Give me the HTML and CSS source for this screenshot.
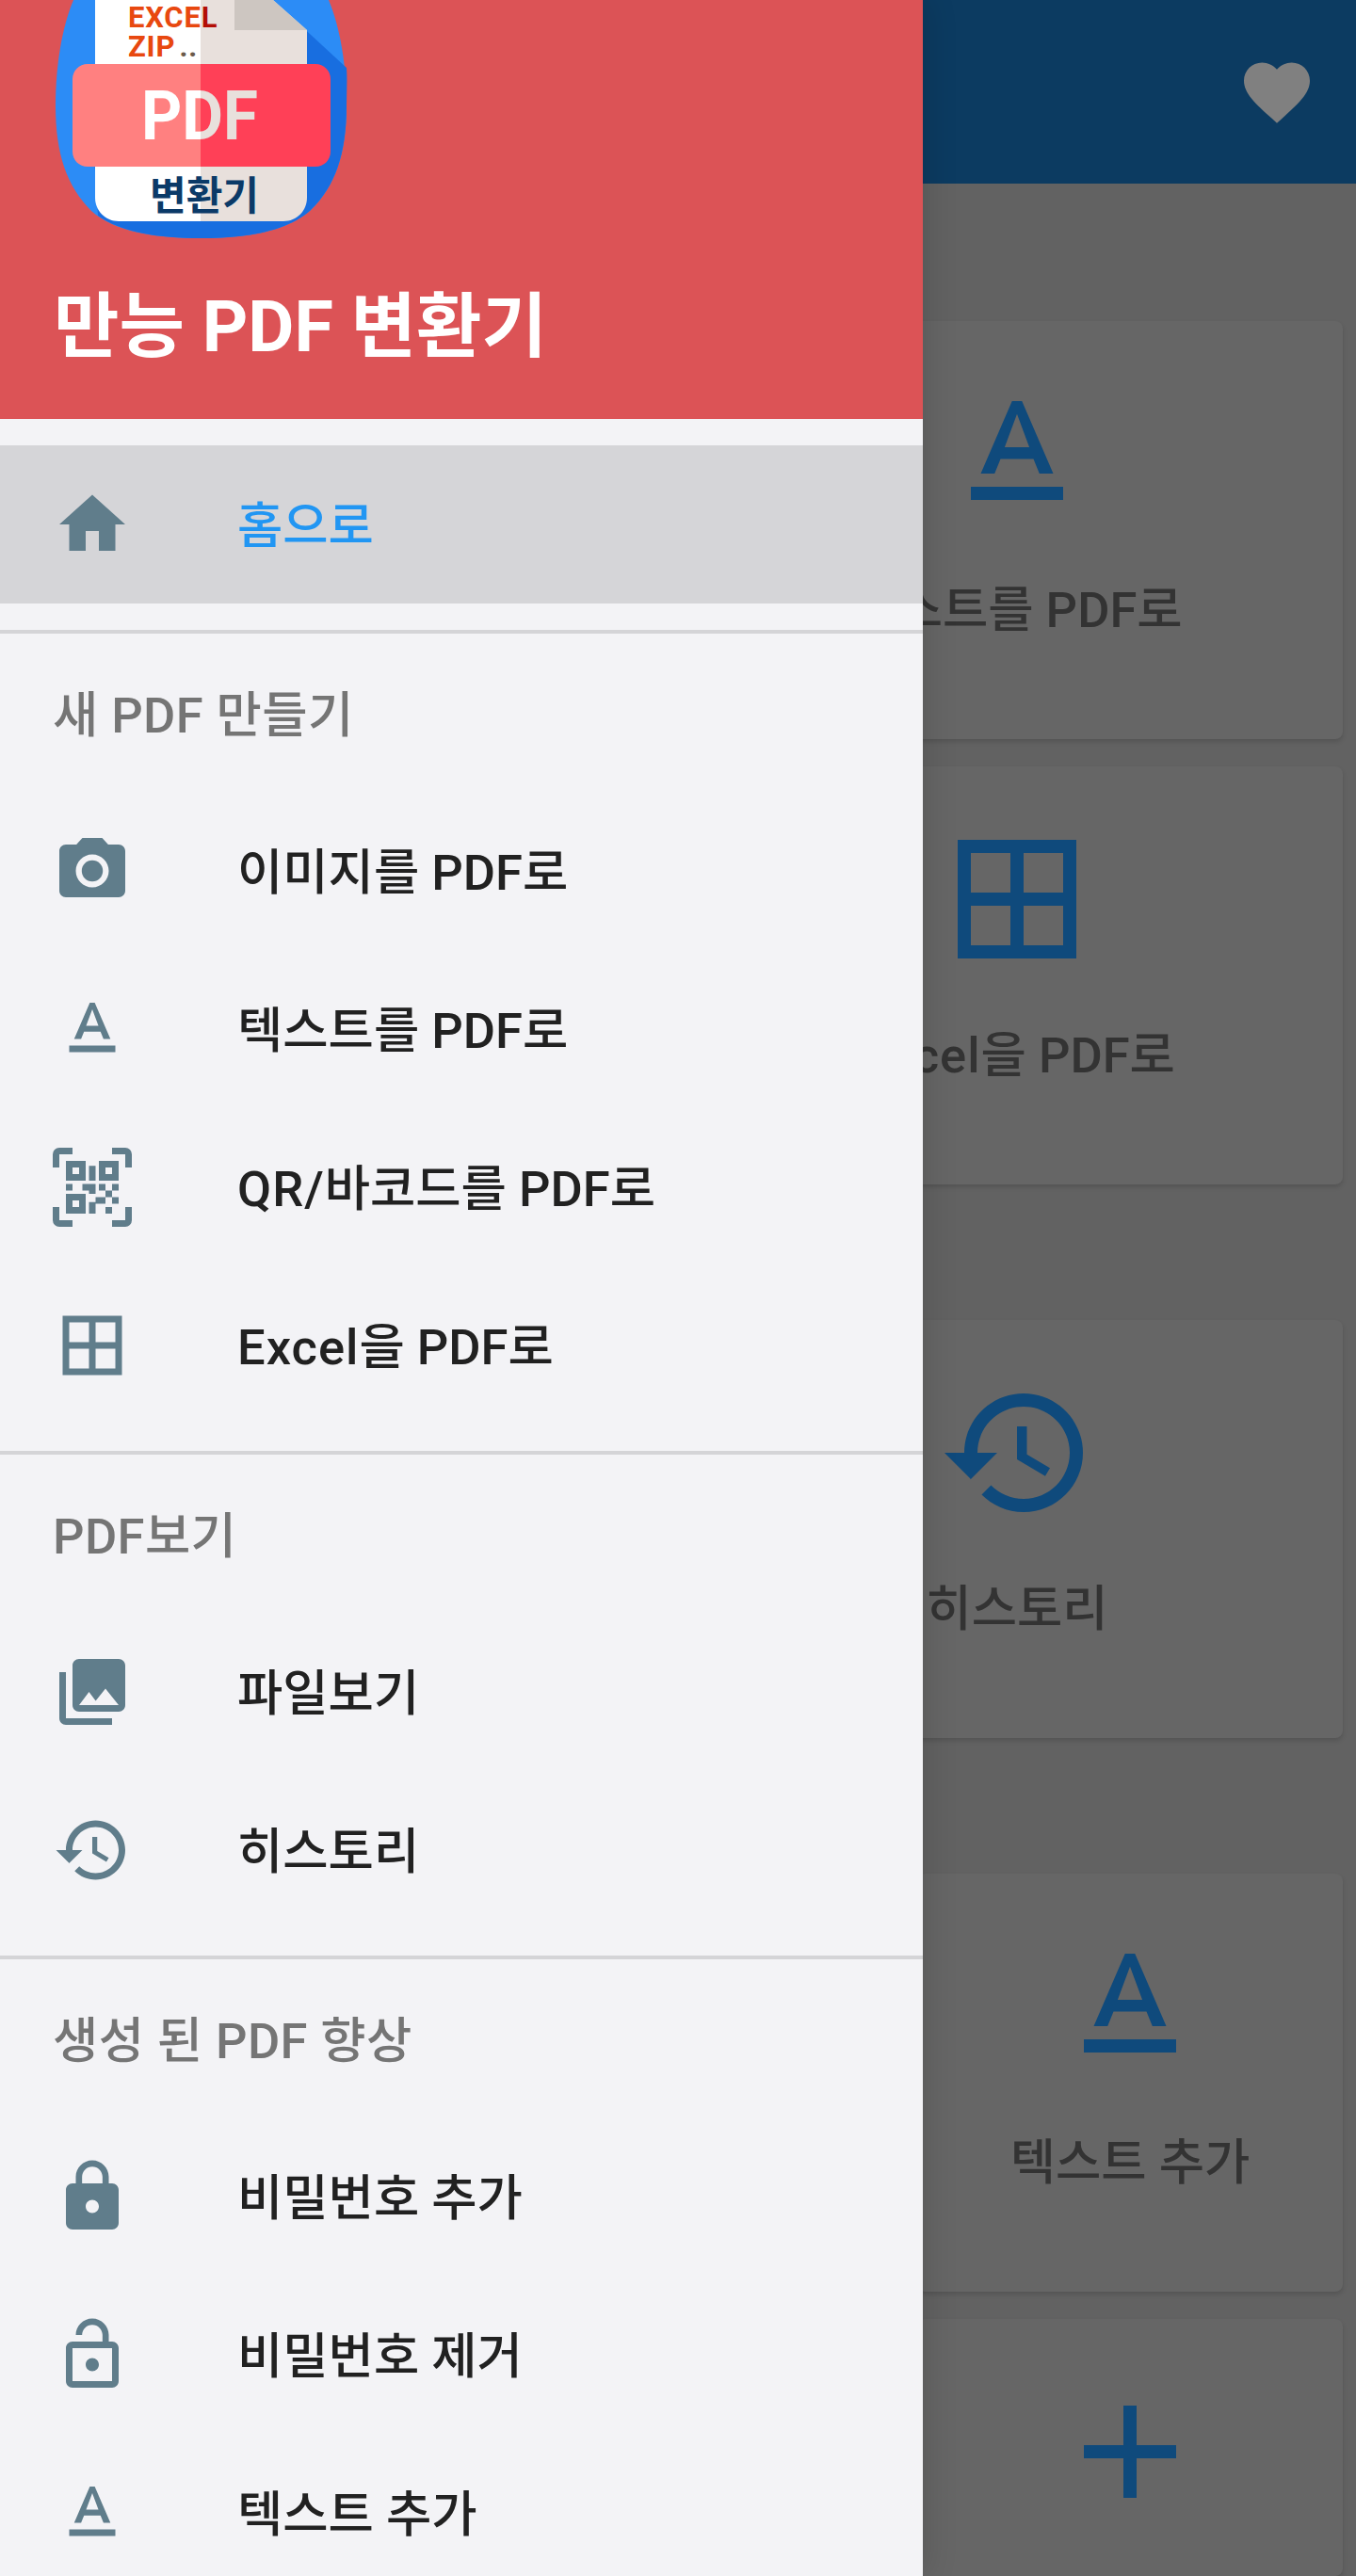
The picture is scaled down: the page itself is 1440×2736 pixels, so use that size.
FILE: index.html
```html
<!DOCTYPE html>
<html lang="ko">
<head>
    <meta charset="UTF-8">
    <meta name="viewport" content="width=device-width, initial-scale=1.0">
    <title>만능 PDF 변환기</title>
    <link rel="stylesheet" href="styles.css">
</head>
<body>
    <svg class="sprite" width="0" height="0">
        <symbol id="i-text" viewBox="0 0 24 24"><path d="M5 17v2h14v-2H5zm4.5-4.2h5l.9 2.2h2.1L12.75 4h-1.5L6.5 15h2.1l.9-2.2zM12 5.98L13.87 11h-3.74L12 5.98z"/></symbol>
        <symbol id="i-grid" viewBox="0 0 24 24"><path d="M3 3v18h18V3H3zm8 16H5v-6h6v6zm0-8H5V5h6v6zm8 8h-6v-6h6v6zm0-8h-6V5h6v6z"/></symbol>
        <symbol id="i-history" viewBox="0 0 24 24"><path d="M13 3c-4.97 0-9 4.03-9 9H1l3.89 3.89.07.14L9 12H6c0-3.87 3.13-7 7-7s7 3.13 7 7-3.13 7-7 7c-1.93 0-3.68-.79-4.94-2.06l-1.42 1.42C8.27 19.99 10.51 21 13 21c4.97 0 9-4.03 9-9s-4.03-9-9-9zm-1 5v5l4.28 2.54.72-1.21-3.5-2.08V8H12z"/></symbol>
    </svg>

    <!-- 뒤쪽 메인 화면 -->
    <div class="app">
        <div class="toolbar">
            <svg class="heart" viewBox="0 0 24 24"><path d="M12 21.35l-1.45-1.32C5.4 15.36 2 12.28 2 8.5 2 5.42 4.42 3 7.5 3c1.74 0 3.41.81 4.5 2.09C13.09 3.81 14.76 3 16.5 3 19.58 3 22 5.42 22 8.5c0 3.78-3.4 6.86-8.55 11.54L12 21.35z"/></svg>
        </div>

        <div class="section section-first">
            <div class="cards cards-2">
                <div class="card"></div>
                <div class="card">
                    <svg class="card-icon"><use href="#i-text"/></svg>
                    <p>텍스트를 PDF로</p>
                </div>
                <div class="card"></div>
                <div class="card">
                    <svg class="card-icon"><use href="#i-grid"/></svg>
                    <p><span class="latin">Excel</span>을 PDF로</p>
                </div>
            </div>
        </div>

        <div class="section">
            <div class="cards cards-2">
                <div class="card"></div>
                <div class="card">
                    <svg class="card-icon"><use href="#i-history"/></svg>
                    <p>히스토리</p>
                </div>
            </div>
        </div>

        <div class="section">
            <div class="cards cards-3">
                <div class="card"></div>
                <div class="card"></div>
                <div class="card">
                    <svg class="card-icon"><use href="#i-text"/></svg>
                    <p>텍스트 추가</p>
                </div>
                <div class="card card-last"></div>
                <div class="card card-last"></div>
                <div class="card card-last">
                    <svg class="card-icon" viewBox="0 0 24 24"><path d="M19 13h-6v6h-2v-6H5v-2h6V5h2v6h6v2z"/></svg>
                </div>
            </div>
        </div>
    </div>

    <!-- 네비게이션 드로어 -->
    <div class="drawer">
        <div class="drawer-header">
            <svg class="logo" viewBox="59 0 310 254">
                <defs>
                    <linearGradient id="pdfFill" gradientUnits="userSpaceOnUse" x1="152" y1="0" x2="274" y2="0">
                        <stop offset="0.5" stop-color="#ffffff"/>
                        <stop offset="0.5" stop-color="#e8e0dc"/>
                    </linearGradient>
                </defs>
                <path fill="#2c8cf6" d="M78 0C66 28 59 70 59 112c0 52 12 86 38 112 24 22 68 29 116 29s92-7 117-30c26-25 38-60 38-111 0-42-7-84-19-112z"/>
                <path fill="#186ee0" d="M290 0l78 72c1 14 0 27 0 40 0 51-12 86-38 111-25 23-69 30-117 30-44 0-84-6-109-24l-4-62z"/>
                <path fill="#ffffff" d="M101 0h112v235h-87c-14 0-25-11-25-25z"/>
                <path fill="#e8e0dc" d="M213 0h77l36 32v178c0 14-11 25-25 25h-88z"/>
                <path fill="#cdc6c1" d="M249 0h41l36 32h-77z"/>
                <text class="logo-small" x="136" y="29">EXCE<tspan fill="#b30e05">L</tspan></text>
                <text class="logo-small" x="136" y="60">ZIP<tspan fill="#6b5a4a" dx="10">..</tspan></text>
                <path fill="#ff8080" d="M213 68H93c-9 0-16 7-16 16v77c0 9 7 16 16 16h120z"/>
                <path fill="#ff4057" d="M213 68h122c9 0 16 7 16 16v77c0 9-7 16-16 16H213z"/>
                <text class="logo-pdf" x="150" y="148" fill="url(#pdfFill)" textLength="124" lengthAdjust="spacingAndGlyphs">PDF</text>
                <text class="logo-name" x="159" y="223" textLength="116" lengthAdjust="spacingAndGlyphs">변환기</text>
            </svg>
            <div class="drawer-title">만능 PDF 변환기</div>
        </div>

        <div class="group group-home">
            <a class="item active">
                <svg class="item-icon" viewBox="0 0 24 24"><path d="M10 20v-6h4v6h5v-8h3L12 3 2 12h3v8z"/></svg>
                <span>홈으로</span>
            </a>
        </div>

        <div class="group">
            <div class="group-title">새 PDF 만들기</div>
            <a class="item">
                <svg class="item-icon" viewBox="0 0 24 24"><circle cx="12" cy="12" r="3.2"/><path d="M9 2L7.17 4H4c-1.1 0-2 .9-2 2v12c0 1.1.9 2 2 2h16c1.1 0 2-.9 2-2V6c0-1.1-.9-2-2-2h-3.17L15 2H9zm3 15c-2.76 0-5-2.24-5-5s2.24-5 5-5 5 2.24 5 5-2.24 5-5 5z"/></svg>
                <span>이미지를 PDF로</span>
            </a>
            <a class="item">
                <svg class="item-icon"><use href="#i-text"/></svg>
                <span>텍스트를 PDF로</span>
            </a>
            <a class="item">
                <svg class="item-icon" viewBox="0 0 24 24"><path d="M0 6V2a2 2 0 0 1 2-2h4v2H2v4zM18 0h4a2 2 0 0 1 2 2v4h-2V2h-4zM0 18h2v4h4v2H2a2 2 0 0 1-2-2zM22 18h2v4a2 2 0 0 1-2 2h-4v-2h4z"/><path fill-rule="evenodd" d="M4 4h6v6H4zM6 6v2h2V6zM14 4h6v6h-6zM16 6v2h2V6zM4 14h6v6H4zM6 16v2h2v-2zM11 5.500h2V10h-2zM4 11h2v2H4zM9 11h4v3h-2v-1H9zM14 11h2v2h-2zM18 11h2v2h-2zM16 13h2v2h-2zM13 15h3v2h-3zM18 15h2v2h-2zM11 16.500h2V20h-2zM16 18h2v2h-2z"/></svg>
                <span><b class="latin">QR/</b>바코드를 PDF로</span>
            </a>
            <a class="item">
                <svg class="item-icon"><use href="#i-grid"/></svg>
                <span><b class="latin">Excel</b>을 PDF로</span>
            </a>
        </div>

        <div class="group">
            <div class="group-title">PDF보기</div>
            <a class="item">
                <svg class="item-icon" viewBox="0 0 24 24"><path d="M22 16V4c0-1.100-.9-2-2-2H8c-1.100 0-2 .9-2 2v12c0 1.100.9 2 2 2h12c1.100 0 2-.9 2-2zm-11-4l2.030 2.710L16 11l4 5H8l3-4zM2 6v14c0 1.100.9 2 2 2h14v-2H4V6H2z"/></svg>
                <span>파일보기</span>
            </a>
            <a class="item">
                <svg class="item-icon"><use href="#i-history"/></svg>
                <span>히스토리</span>
            </a>
        </div>

        <div class="group">
            <div class="group-title">생성 된 PDF 향상</div>
            <a class="item">
                <svg class="item-icon" viewBox="0 0 24 24"><path d="M18 8h-1V6c0-2.760-2.240-5-5-5S7 3.240 7 6v2H6c-1.100 0-2 .9-2 2v10c0 1.100.9 2 2 2h12c1.100 0 2-.9 2-2V10c0-1.100-.9-2-2-2zm-6 9c-1.100 0-2-.9-2-2s.9-2 2-2 2 .9 2 2-.9 2-2 2zm3.100-9H8.900V6c0-1.710 1.390-3.100 3.100-3.100 1.710 0 3.100 1.390 3.100 3.100v2z"/></svg>
                <span>비밀번호 추가</span>
            </a>
            <a class="item">
                <svg class="item-icon" viewBox="0 0 24 24"><path d="M12 17c1.100 0 2-.9 2-2s-.9-2-2-2-2 .9-2 2 .9 2 2 2zm6-9h-1V6c0-2.760-2.240-5-5-5S7 3.240 7 6h1.900c0-1.710 1.390-3.100 3.100-3.100 1.710 0 3.100 1.390 3.100 3.100v2H6c-1.100 0-2 .9-2 2v10c0 1.100.9 2 2 2h12c1.100 0 2-.9 2-2V10c0-1.100-.9-2-2-2zm0 12H6V10h12v10z"/></svg>
                <span>비밀번호 제거</span>
            </a>
            <a class="item">
                <svg class="item-icon"><use href="#i-text"/></svg>
                <span>텍스트 추가</span>
            </a>
        </div>
    </div>
</body>
</html>
```

FILE: styles.css
```css
* {
    margin: 0;
    padding: 0;
    box-sizing: border-box;
}

html, body {
    height: 2736px;
    overflow: hidden;
}

body {
    position: relative;
    font-family: Roboto, "Noto Sans CJK KR", sans-serif;
    background: #626262;
}

.sprite {
    position: absolute;
}

.latin {
    font-weight: inherit;
    letter-spacing: 1px;
}

/* main screen, dimmed behind the drawer */
.toolbar {
    height: 195px;
    background: #0c3b61;
    display: flex;
    justify-content: flex-end;
    align-items: center;
    padding-right: 42px;
}

.heart {
    width: 84px;
    height: 84px;
    fill: #808080;
}

.section {
    padding: 144px 14px 0;
}

.section-first {
    padding-top: 146px;
}

.cards {
    display: grid;
    gap: 29px 28px;
}

.cards-2 {
    grid-template-columns: 1fr 1fr;
}

.cards-3 {
    grid-template-columns: 1fr 1fr 1fr;
}

.card {
    height: 444px;
    background: #666666;
    border-radius: 8px;
    box-shadow: 0 3px 5px rgba(0, 0, 0, 0.14);
    display: flex;
    flex-direction: column;
    align-items: center;
    padding-top: 57px;
}

.card-last {
    height: 273px;
}

.card-icon {
    flex: none;
    width: 168px;
    height: 168px;
    fill: #0f4a7c;
}

.card p {
    margin-top: 48px;
    font-size: 52.5px;
    line-height: 68px;
    font-weight: 500;
    color: #333333;
}

/* drawer */
.drawer {
    position: absolute;
    top: 0;
    left: 0;
    width: 980px;
    height: 2736px;
    overflow: hidden;
    background: #f3f3f6;
    box-shadow: 6px 0 30px rgba(0, 0, 0, 0.12);
}

.drawer-header {
    height: 445px;
    background: #dc5356;
    padding-left: 57px;
}

.logo {
    display: block;
    margin-left: 2px;
    width: 310px;
    height: 254px;
}

.logo-small {
    font-family: Roboto, sans-serif;
    font-size: 31px;
    font-weight: 700;
    letter-spacing: 0.8px;
    fill: #e8480f;
}

.logo-pdf {
    font-family: Roboto, sans-serif;
    font-size: 72px;
    font-weight: 700;
}

.logo-name {
    font-size: 42px;
    font-weight: 700;
    fill: #0b3a68;
}

.drawer-title {
    margin-top: 46px;
    font-size: 75.5px;
    line-height: 94px;
    font-weight: 700;
    color: #ffffff;
}

.group {
    padding-bottom: 28px;
    border-bottom: 4px solid #d4d4d7;
}

.group-home {
    padding-top: 28px;
}

.group-title {
    height: 168px;
    padding: 9px 0 0 56px;
    line-height: 157px;
    font-size: 52.5px;
    font-weight: 500;
    letter-spacing: 0.4px;
    color: #757575;
}

.item {
    height: 168px;
    display: flex;
    align-items: center;
    padding-left: 56px;
    font-size: 52.5px;
    font-weight: 500;
    color: #212121;
}

.item > span {
    margin-bottom: 6px;
}

.item-icon {
    flex: none;
    width: 84px;
    height: 84px;
    margin-right: 112px;
    fill: #607d8b;
}

.item.active {
    background: #d5d5d8;
    color: #2196f3;
}
```
